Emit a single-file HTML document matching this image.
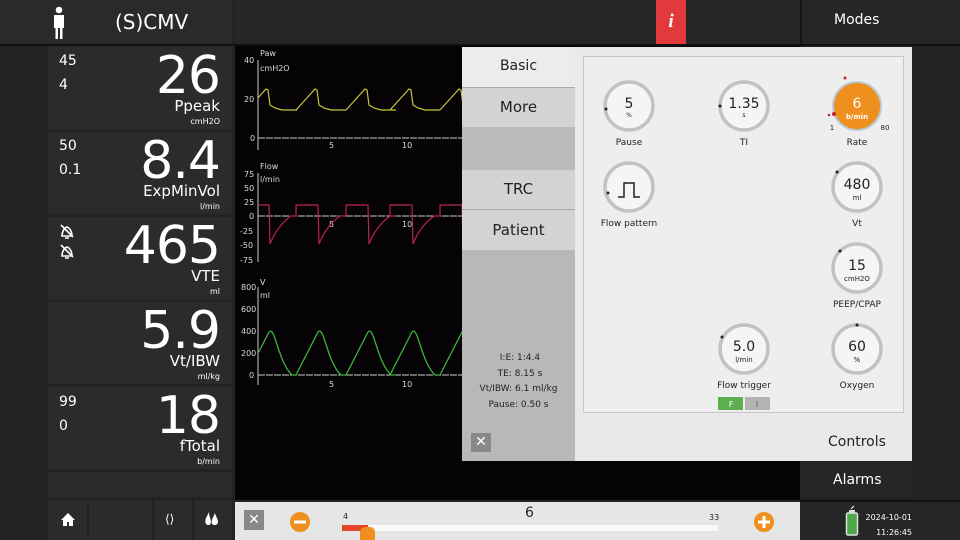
<!DOCTYPE html>
<html><head><meta charset="utf-8"><style>
*{margin:0;padding:0;box-sizing:border-box}
html,body{width:960px;height:540px;overflow:hidden}
body{background:#232323;position:relative;font-family:"DejaVu Sans","Liberation Sans",sans-serif;color:#fff}
.a{position:absolute}
.p{position:absolute;left:48px;width:184px;background:#2b2b2b}
.big{position:absolute;right:12px;font-size:52px;line-height:1;font-family:"DejaVu Sans",sans-serif;letter-spacing:-1px}
.lab{position:absolute;right:12px;font-size:15px}
.un{position:absolute;right:12px;font-size:8px}
.lim{position:absolute;left:11px;font-size:14px}
.tab{position:absolute;left:462px;width:113px;text-align:center;font-size:15px;color:#222}
</style></head><body>
<div class="a" style="left:0;top:0;width:232px;height:44px;background:#2a2a2a"></div>
<div class="a" style="left:235px;top:0;width:565px;height:44px;background:#262626"></div>
<div class="a" style="left:656px;top:0;width:30px;height:44px;background:#e2393c;font-family:'Liberation Serif',serif;font-style:italic;font-weight:bold;font-size:19px;text-align:center;line-height:44px">i</div>
<div class="a" style="left:800px;top:0;width:160px;height:44px;background:#262626;border-left:2px solid #151515"></div>
<div class="a" style="left:834px;top:12px;font-size:14px">Modes</div>
<svg class="a" style="left:52px;top:6px" width="14" height="34" viewBox="0 0 14 34"><circle cx="7" cy="4" r="3.3" fill="#fff"/><path d="M2 9h10v13h-1.5v11h-2.5v-11h-2v11h-2.5v-11h-1.5z" fill="#fff"/></svg>
<div class="a" style="left:115px;top:10px;font-size:20px">(S)CMV</div>
<div class="a" style="left:0;top:44px;width:960px;height:2px;background:#111"></div>
<div class="p" style="top:47px;height:82px"></div>
<div class="p" style="top:132px;height:82px"></div>
<div class="p" style="top:217px;height:82px"></div>
<div class="p" style="top:302px;height:82px"></div>
<div class="p" style="top:387px;height:82px"></div>
<div class="p" style="top:472px;height:25px"></div>
<div class="lim" style="left:59px;top:53px">45</div><div class="lim" style="left:59px;top:77px">4</div>
<div class="big" style="left:0;width:220px;text-align:right;top:50px">26</div>
<div class="lab" style="left:0;width:220px;text-align:right;top:97px">Ppeak</div>
<div class="un" style="left:0;width:220px;text-align:right;top:117px">cmH2O</div>
<div class="lim" style="left:59px;top:138px">50</div><div class="lim" style="left:59px;top:162px">0.1</div>
<div class="big" style="left:0;width:220px;text-align:right;top:135px">8.4</div>
<div class="lab" style="left:0;width:220px;text-align:right;top:182px">ExpMinVol</div>
<div class="un" style="left:0;width:220px;text-align:right;top:202px">l/min</div>
<svg class="a" style="left:59px;top:223px" width="16" height="36" viewBox="0 0 16 36"><g fill="none" stroke="#fff" stroke-width="1.6"><path d="M3 13c0-4 2-8 5-9c3 1 5 5 5 9zM2 2l12 12M6 15h4"/><path d="M3 33c0-4 2-8 5-9c3 1 5 5 5 9zM2 22l12 12M6 35h4"/></g></svg>
<div class="big" style="left:0;width:220px;text-align:right;top:220px">465</div>
<div class="lab" style="left:0;width:220px;text-align:right;top:267px">VTE</div>
<div class="un" style="left:0;width:220px;text-align:right;top:287px">ml</div>
<div class="big" style="left:0;width:220px;text-align:right;top:305px">5.9</div>
<div class="lab" style="left:0;width:220px;text-align:right;top:352px">Vt/IBW</div>
<div class="un" style="left:0;width:220px;text-align:right;top:372px">ml/kg</div>
<div class="lim" style="left:59px;top:394px">99</div><div class="lim" style="left:59px;top:418px">0</div>
<div class="big" style="left:0;width:220px;text-align:right;top:390px">18</div>
<div class="lab" style="left:0;width:220px;text-align:right;top:437px">fTotal</div>
<div class="un" style="left:0;width:220px;text-align:right;top:457px">b/min</div>
<div class="a" style="left:48px;top:500px;width:39px;height:40px;background:#2b2b2b"></div>
<div class="a" style="left:89px;top:500px;width:63px;height:40px;background:#2b2b2b"></div>
<div class="a" style="left:154px;top:500px;width:38px;height:40px;background:#2b2b2b"></div>
<div class="a" style="left:194px;top:500px;width:38px;height:40px;background:#2b2b2b"></div>
<svg class="a" style="left:61px;top:513px" width="14" height="13" viewBox="0 0 14 13"><path d="M7 0L0 7h2v6h4v-4h2v4h4V7h2z" fill="#fff"/></svg>
<div class="a" style="left:165px;top:512px;font-size:12px">⟨⟩</div>
<svg class="a" style="left:204px;top:512px" width="16" height="14" viewBox="0 0 16 14"><path d="M5 0C3 5 0 7 2 12c2 2 5 1 5-2C7 7 5 5 5 0zM11 1c-2 5-4 7-3 11c2 2 6 1 6-2c0-3-2-5-3-9z" fill="#fff"/></svg>
<div class="a" style="left:235px;top:46px;width:565px;height:454px;background:#060306"></div>
<svg class="a" style="left:235px;top:46px" width="227" height="454" viewBox="235 46 227 454" font-family="DejaVu Sans,sans-serif" font-size="8" fill="#ddd">
<defs><clipPath id="c"><rect x="258" y="46" width="204" height="454"/></clipPath>
<path id="pw" d="M0 110L19 89L21 90L23 105L28 108L35 110L50 110" fill="none" stroke="#c8c83a" stroke-width="1.2"/>
<path id="fl" d="M0 216L0 205L22 205L23 244Q30 226 44 216L50 216" fill="none" stroke="#b8244a" stroke-width="1.2"/>
<path id="vo" d="M0 375L22 332C28 325 31 362 45 375L50 375" fill="none" stroke="#3cb43c" stroke-width="1.3"/></defs>
<g stroke="#ccc" stroke-width="1"><path d="M258 60V150M258 173V262M258 287V385"/><path d="M258 138H462M258 216H462M258 375H462" stroke-dasharray="7 1"/></g>
<text x="244" y="63">40</text><text x="244" y="102">20</text><text x="250" y="141">0</text>
<text x="260" y="56">Paw</text><text x="260" y="71">cmH2O</text>
<text x="329" y="148">5</text><text x="402" y="148">10</text>
<text x="260" y="169">Flow</text><text x="260" y="182">l/min</text>
<text x="244" y="177">75</text><text x="244" y="191">50</text><text x="244" y="205">25</text><text x="249" y="219">0</text><text x="240" y="234">-25</text><text x="240" y="248">-50</text><text x="240" y="263">-75</text>
<text x="329" y="227">5</text><text x="402" y="227">10</text>
<text x="260" y="285">V</text><text x="260" y="298">ml</text>
<text x="241" y="290">800</text><text x="241" y="312">600</text><text x="241" y="334">400</text><text x="241" y="356">200</text><text x="249" y="378">0</text>
<text x="329" y="387">5</text><text x="402" y="387">10</text>
<g clip-path="url(#c)">
<use href="#pw" x="247"/><use href="#pw" x="296"/><use href="#pw" x="346"/><use href="#pw" x="390"/><use href="#pw" x="440"/>
<use href="#fl" x="247"/><use href="#fl" x="296"/><use href="#fl" x="346"/><use href="#fl" x="390"/><use href="#fl" x="440"/>
<use href="#vo" x="247"/><use href="#vo" x="296"/><use href="#vo" x="346"/><use href="#vo" x="390"/><use href="#vo" x="440"/>
</g></svg>
<div class="a" style="left:462px;top:47px;width:450px;height:414px;background:#e9e9e9"></div>
<div class="a" style="left:462px;top:47px;width:113px;height:40px;background:#ececec"></div>
<div class="a" style="left:462px;top:87px;width:113px;height:40px;background:#d3d3d3;border-top:1px solid #aaa"></div>
<div class="a" style="left:462px;top:127px;width:113px;height:43px;background:#bbb"></div>
<div class="a" style="left:462px;top:170px;width:113px;height:40px;background:#d3d3d3;border-bottom:1px solid #aaa"></div>
<div class="a" style="left:462px;top:210px;width:113px;height:40px;background:#d3d3d3"></div>
<div class="a" style="left:462px;top:250px;width:113px;height:211px;background:#b8b8b8"></div>
<div class="tab" style="top:58px;font-size:14px">Basic</div>
<div class="tab" style="top:98px">More</div>
<div class="tab" style="top:180px">TRC</div>
<div class="tab" style="top:221px">Patient</div>
<div class="a" style="left:462px;top:351px;width:113px;font-size:9px;color:#222;text-align:center;line-height:15.5px">&nbsp;I:E: 1:4.4<br>&nbsp;TE: 8.15 s<br>Vt/IBW: 6.1 ml/kg<br>Pause: 0.50 s</div>
<div class="a" style="left:471px;top:433px;width:20px;height:19px;background:#888;color:#fff;text-align:center;font-size:14px;line-height:19px">✕</div>
<div class="a" style="left:583px;top:56px;width:321px;height:357px;background:#eeeeee;border:1px solid #c8c8c8"></div>
<div class="a" style="left:828px;top:434px;font-size:14px;color:#222">Controls</div>
<svg class="a" style="left:583px;top:56px" width="321" height="357" viewBox="583 56 321 357" font-family="DejaVu Sans,sans-serif" text-anchor="middle" fill="#222">
<g fill="#f5f5f5" stroke="#c2c2c2" stroke-width="3.5">
<circle cx="629" cy="106" r="24"/><circle cx="744" cy="106" r="24"/><circle cx="629" cy="187" r="24"/><circle cx="857" cy="187" r="24"/><circle cx="857" cy="268" r="24"/><circle cx="744" cy="349" r="24"/><circle cx="857" cy="349" r="24"/></g>
<circle cx="857" cy="106" r="24" fill="#ee8f1e" stroke="#b9c9d8" stroke-width="2"/>
<g fill="#222"><circle cx="606" cy="109" r="1.5"/><circle cx="720" cy="106" r="1.5"/><circle cx="608" cy="193" r="1.5"/><circle cx="837" cy="172" r="1.5"/><circle cx="840" cy="251" r="1.5"/><circle cx="722" cy="337" r="1.5"/><circle cx="857" cy="325" r="1.5"/></g>
<g fill="#c0282a"><circle cx="845" cy="78" r="1.5"/><circle cx="834" cy="114" r="2"/><circle cx="829" cy="115" r="1.3"/></g>
<text x="629" y="108" font-size="14">5</text><text x="629" y="117" font-size="6">%</text>
<text x="744" y="108" font-size="14">1.35</text><text x="744" y="117" font-size="6">s</text>
<text x="857" y="108" font-size="14" fill="#fff">6</text><text x="857" y="119" font-size="7" font-weight="bold" fill="#fff">b/min</text>
<text x="832" y="130" font-size="7">1</text><text x="885" y="130" font-size="7">80</text>
<text x="857" y="189" font-size="14">480</text><text x="857" y="200" font-size="7">ml</text>
<text x="857" y="270" font-size="14">15</text><text x="857" y="281" font-size="7">cmH2O</text>
<text x="744" y="351" font-size="14">5.0</text><text x="744" y="362" font-size="7">l/min</text>
<text x="857" y="351" font-size="14">60</text><text x="857" y="362" font-size="7">%</text>
<path d="M618 197h6v-14h10v14h6" fill="none" stroke="#222" stroke-width="1.5"/>
<g font-size="9"><text x="629" y="145">Pause</text><text x="744" y="145">TI</text><text x="857" y="145">Rate</text><text x="629" y="226">Flow pattern</text><text x="857" y="226">Vt</text><text x="857" y="307">PEEP/CPAP</text><text x="744" y="388">Flow trigger</text><text x="857" y="388">Oxygen</text></g>
<rect x="718" y="397" width="25" height="13" fill="#5cae4e"/><rect x="745" y="397" width="25" height="13" fill="#b3b3b3"/>
<text x="731" y="407" font-size="8" fill="#fff">F</text><text x="757" y="407" font-size="8" fill="#555">I</text>
</svg>
<div class="a" style="left:800px;top:463px;width:112px;height:35px;background:#262626"></div>
<div class="a" style="left:833px;top:472px;font-size:14px">Alarms</div>
<div class="a" style="left:800px;top:500px;width:160px;height:40px;background:#262626;border-top:2px solid #111"></div>
<svg class="a" style="left:845px;top:505px" width="14" height="32" viewBox="0 0 14 32"><path d="M6 4l3-3" stroke="#fff" stroke-width="1"/><rect x="4" y="5" width="6" height="3" fill="#ddd"/><rect x="1.5" y="8" width="11" height="22" rx="1.5" fill="#4ea84a" stroke="#ddd" stroke-width="1.5"/></svg>
<div class="a" style="left:856px;top:510px;font-size:8px;text-align:right;width:56px;line-height:15px;white-space:nowrap">2024-10-01<br>11:26:45</div>
<div class="a" style="left:235px;top:502px;width:565px;height:38px;background:#e6e6e6"></div>
<div class="a" style="left:244px;top:510px;width:20px;height:20px;background:#888;color:#fff;text-align:center;font-size:14px;line-height:20px">✕</div>
<svg class="a" style="left:289px;top:511px" width="22" height="22"><circle cx="11" cy="11" r="10" fill="#ee8f1e"/><rect x="5" y="9.5" width="12" height="3" fill="#fff"/></svg>
<svg class="a" style="left:753px;top:511px" width="22" height="22"><circle cx="11" cy="11" r="10" fill="#ee8f1e"/><rect x="5" y="9.5" width="12" height="3" fill="#fff"/><rect x="9.5" y="5" width="3" height="12" fill="#fff"/></svg>
<div class="a" style="left:342px;top:525px;width:376px;height:6px;background:#fafafa"></div>
<div class="a" style="left:342px;top:525px;width:26px;height:6px;background:#e2452a"></div>
<div class="a" style="left:360px;top:527px;width:15px;height:13px;background:#ee8f1e;border-radius:5px 5px 0 0"></div>
<div class="a" style="left:343px;top:512px;font-size:8px;color:#222">4</div>
<div class="a" style="left:709px;top:513px;font-size:8px;color:#222">33</div>
<div class="a" style="left:525px;top:505px;font-size:14px;color:#222">6</div>
</body></html>
